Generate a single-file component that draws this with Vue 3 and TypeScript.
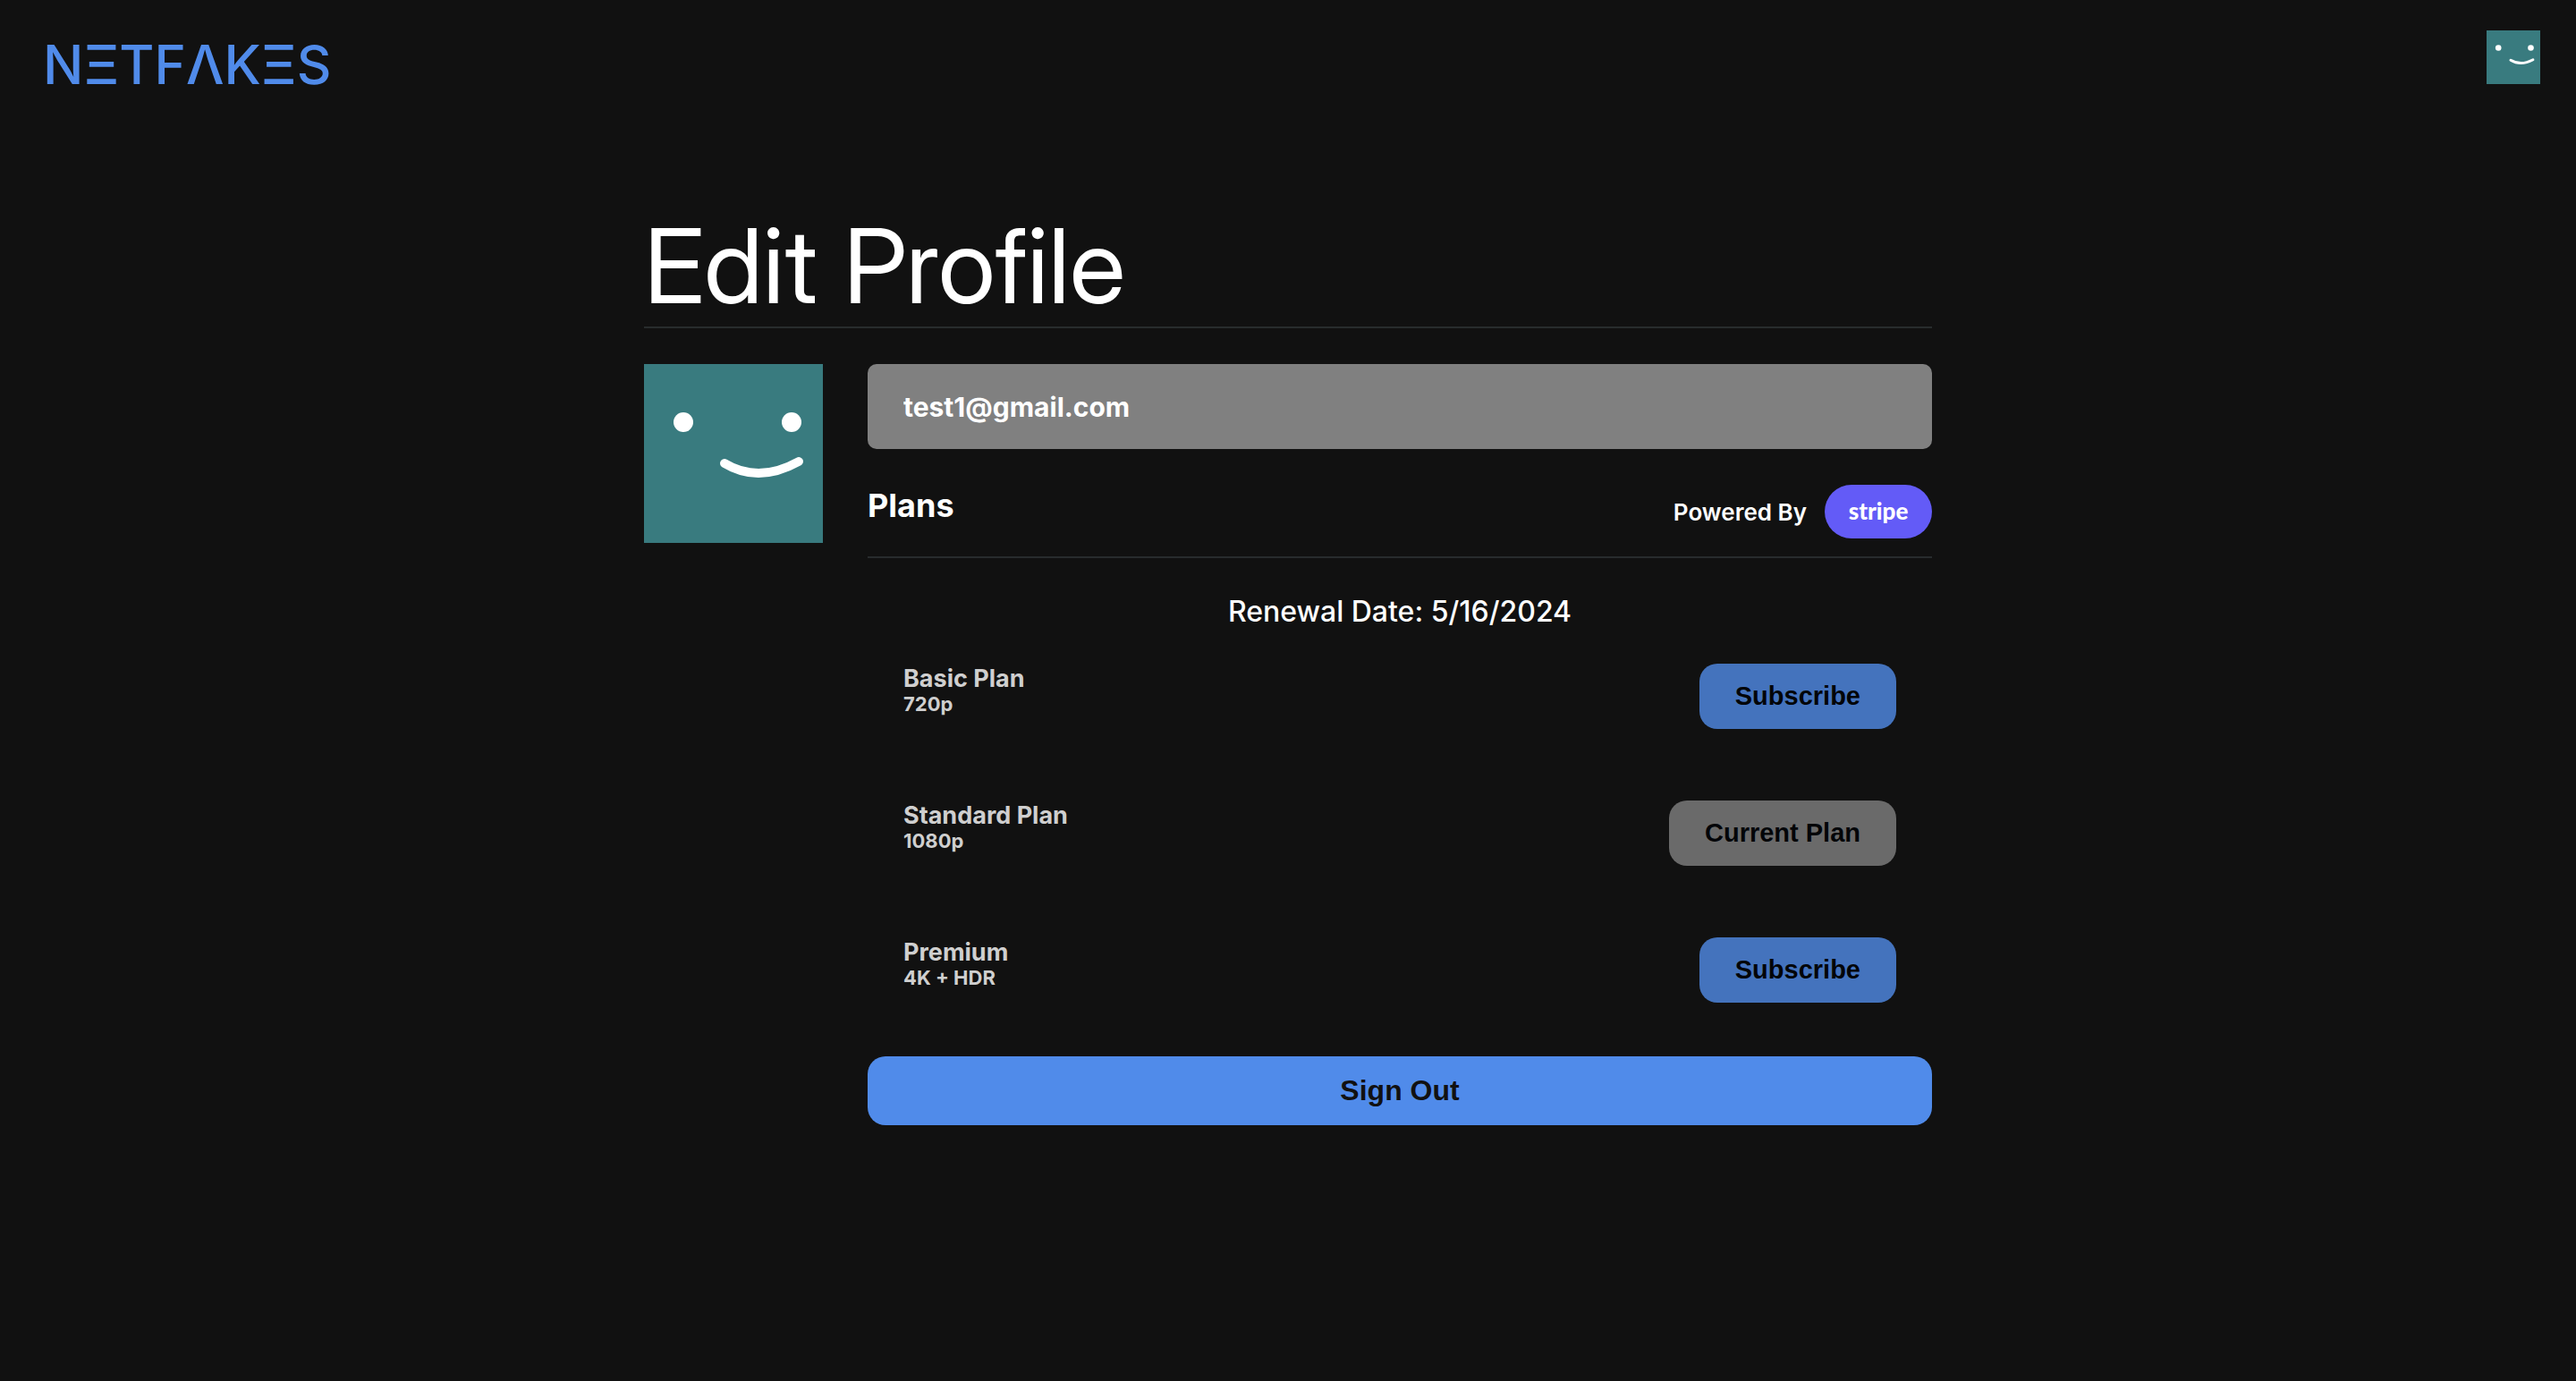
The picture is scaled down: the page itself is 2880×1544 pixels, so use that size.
<script setup lang="ts">
interface Plan {
  name: string
  quality: string
  current: boolean
}

const email = 'test1@gmail.com'
const renewalDate = '5/16/2024'

const plans: Plan[] = [
  { name: 'Basic Plan', quality: '720p', current: false },
  { name: 'Standard Plan', quality: '1080p', current: true },
  { name: 'Premium', quality: '4K + HDR', current: false },
]
</script>

<template>
  <div class="page">
    <header class="nav">
      <a class="logo" href="#" aria-label="NETFAKES">NΞTFΛKΞS</a>
      <a class="nav-avatar" href="#" aria-label="Profile">
        <svg class="face" viewBox="0 0 200 200" aria-hidden="true">
          <rect width="200" height="200" fill="#397b7f" />
          <circle cx="44" cy="65" r="11" fill="#fff" />
          <circle cx="165" cy="65" r="11" fill="#fff" />
          <path d="M90 111 Q128 134 173 109" fill="none" stroke="#fff" stroke-width="10" stroke-linecap="round" />
        </svg>
      </a>
    </header>

    <main class="profile">
      <h1 class="title">Edit Profile</h1>
      <div class="info">
        <svg class="face avatar" viewBox="0 0 200 200" role="img" aria-label="Avatar">
          <rect width="200" height="200" fill="#397b7f" />
          <circle cx="44" cy="65" r="11" fill="#fff" />
          <circle cx="165" cy="65" r="11" fill="#fff" />
          <path d="M90 111 Q128 134 173 109" fill="none" stroke="#fff" stroke-width="10" stroke-linecap="round" />
        </svg>

        <div class="details">
          <input class="email" type="email" :value="email" aria-label="Email" readonly />

          <div class="plans-head">
            <h2 class="plans-title">Plans</h2>
            <div class="powered">
              <span>Powered By</span>
              <a class="stripe" href="#">stripe</a>
            </div>
          </div>

          <p class="renewal">Renewal Date: {{ renewalDate }}</p>

          <ul class="plans">
            <li v-for="plan in plans" :key="plan.name" class="plan">
              <div>
                <h3 class="plan-name">{{ plan.name }}</h3>
                <p class="plan-quality">{{ plan.quality }}</p>
              </div>
              <button class="plan-button" :class="{ current: plan.current }" type="button">
                {{ plan.current ? 'Current Plan' : 'Subscribe' }}
              </button>
            </li>
          </ul>

          <button class="sign-out" type="button">Sign Out</button>
        </div>
      </div>
    </main>
  </div>
</template>

<style>
body {
  margin: 0;
  background: #111;
}
</style>

<style scoped>
.page {
  box-sizing: border-box;
  min-height: 100vh;
  background: #111;
  color: #fff;
  font-family: Inter, "Liberation Sans", sans-serif;
}

h1,
h2,
h3,
p,
ul {
  margin: 0;
  padding: 0;
}

.nav {
  display: flex;
  justify-content: space-between;
  align-items: flex-start;
  padding: 34px 40px 0 48px;
}

.logo {
  color: #508bea;
  font-size: 60px;
  font-weight: 500;
  line-height: 76px;
  text-decoration: none;
}

.nav-avatar {
  width: 60px;
  height: 60px;
}

.face {
  display: block;
  width: 100%;
}

.profile {
  width: 50%;
  min-width: 800px;
  margin: 0 auto;
  padding-top: 120px;
}

.title {
  border-bottom: 2px solid #282c2d;
  font-family: "Inter Display", "Liberation Sans", sans-serif;
  font-size: 116px;
  font-weight: 400;
  line-height: 135px;
}

.info {
  display: flex;
  gap: 50px;
  padding-top: 40px;
}

.avatar {
  flex: none;
  width: 200px;
  height: 200px;
}

.details {
  display: flex;
  flex: 1;
  flex-direction: column;
}

.email {
  box-sizing: border-box;
  width: 100%;
  height: 95px;
  padding: 0 40px;
  border: 0;
  border-radius: 10px;
  background: #808080;
  color: #fff;
  font: 700 30px Inter, "Liberation Sans", sans-serif;
}

.plans-head {
  display: flex;
  justify-content: space-between;
  align-items: flex-start;
  padding: 40px 0 20px;
  border-bottom: 2px solid #282c2d;
}

.plans-title {
  font-size: 36px;
  font-weight: 700;
  line-height: 46px;
}

.powered {
  display: flex;
  align-items: center;
  gap: 20px;
  font-size: 26px;
  font-weight: 600;
}

.stripe {
  width: 120px;
  border-radius: 30px;
  background: #635bf7;
  color: #fff;
  font-family: Lato, "Open Sans", sans-serif;
  font-size: 26px;
  font-weight: 900;
  line-height: 58px;
  padding-bottom: 2px;
  text-align: center;
  text-decoration: none;
}

.renewal {
  padding-top: 40px;
  font-size: 32px;
  font-weight: 500;
  line-height: 40px;
  text-align: center;
}

.plans {
  list-style: none;
}

.plan {
  display: flex;
  justify-content: space-between;
  align-items: center;
  padding: 38px 40px 42px;
}

.plan-name,
.plan-quality {
  color: #cfcfcf;
  font-weight: 700;
}

.plan-name {
  font-size: 27px;
  line-height: 32px;
}

.plan-quality {
  padding-bottom: 16px;
  font-size: 22px;
  line-height: 24px;
}

.plan-button,
.sign-out {
  border: 0;
  border-radius: 20px;
  font-family: "Liberation Sans", Arial, sans-serif;
  font-weight: 700;
}

.plan-button {
  padding: 20px 40px;
  background: #4473bd;
  color: #030508;
  font-size: 29px;
  line-height: 33px;
}

.plan-button.current {
  background: #6a6a6a;
}

.sign-out {
  margin-top: 18px;
  padding: 20px;
  background: #508bea;
  color: #111;
  font-size: 32px;
  line-height: 37px;
}
</style>
